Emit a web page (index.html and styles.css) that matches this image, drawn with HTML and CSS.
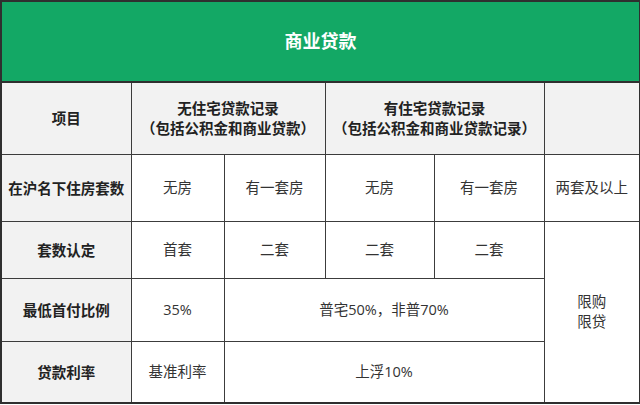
FILE: index.html
```
<!DOCTYPE html>
<html lang="zh">
<head>
<meta charset="utf-8">
<link rel="stylesheet" href="styles.css">
</head>
<body>
<table class="loan">
  <colgroup>
    <col class="c1"><col class="c2"><col class="c3"><col class="c4"><col class="c5"><col class="c6">
  </colgroup>
  <tr class="r0"><td class="title" colspan="6">商业贷款</td></tr>
  <tr class="r1">
    <td class="head">项目</td>
    <td class="head" colspan="2">无住宅贷款记录<br>（包括公积金和商业贷款）</td>
    <td class="head" colspan="2">有住宅贷款记录<br>（包括公积金和商业贷款记录）</td>
    <td class="head"></td>
  </tr>
  <tr class="r2">
    <td class="label">在沪名下住房套数</td>
    <td>无房</td><td>有一套房</td><td>无房</td><td>有一套房</td><td>两套及以上</td>
  </tr>
  <tr class="r3">
    <td class="label">套数认定</td>
    <td>首套</td><td>二套</td><td>二套</td><td>二套</td>
    <td rowspan="3">限购<br>限贷</td>
  </tr>
  <tr class="r4">
    <td class="label">最低首付比例</td>
    <td>35%</td><td colspan="3">普宅50%，非普70%</td>
  </tr>
  <tr class="r5">
    <td class="label">贷款利率</td>
    <td>基准利率</td><td colspan="3">上浮10%</td>
  </tr>
</table>
</body>
</html>
```
FILE: styles.css
```
html, body {
  margin: 0;
  padding: 0;
  background: #ffffff;
}
.loan {
  border-collapse: collapse;
  table-layout: fixed;
  width: 639px;
  margin: 0;
  font-family: "Open Sans", "Noto Sans CJK SC", sans-serif;
  font-size: 14.5px;
  color: #333333;
  border: 2px solid #2f2f2f;
}
.c1 { width: 130px; }
.c2 { width: 93px; }
.c3 { width: 101px; }
.c4 { width: 109px; }
.c5 { width: 110px; }
.c6 { width: 96px; }
.loan td {
  border: 1px solid #3c3c3c;
  text-align: center;
  vertical-align: middle;
  padding: 0;
  line-height: 20px;
  background: #ffffff;
}
.r0 { height: 81px; }
.r1 { height: 72px; }
.r2 { height: 67px; }
.r3 { height: 57px; }
.r4 { height: 63px; }
.r5 { height: 62px; }
.loan td.title {
  background: #13a865;
  color: #ffffff;
  font-family: "Noto Sans CJK SC", sans-serif;
  font-size: 18px;
  font-weight: bold;
  padding-bottom: 3px;
  border-bottom: 2px solid #2f2f2f;
}
.loan td.head {
  background: #f2f2f2;
  font-family: "Noto Sans CJK SC", sans-serif;
  font-weight: bold;
  color: #222222;
}
.loan td.label {
  background: #f2f2f2;
  font-family: "Noto Sans CJK SC", sans-serif;
  font-weight: bold;
  color: #222222;
}
```
